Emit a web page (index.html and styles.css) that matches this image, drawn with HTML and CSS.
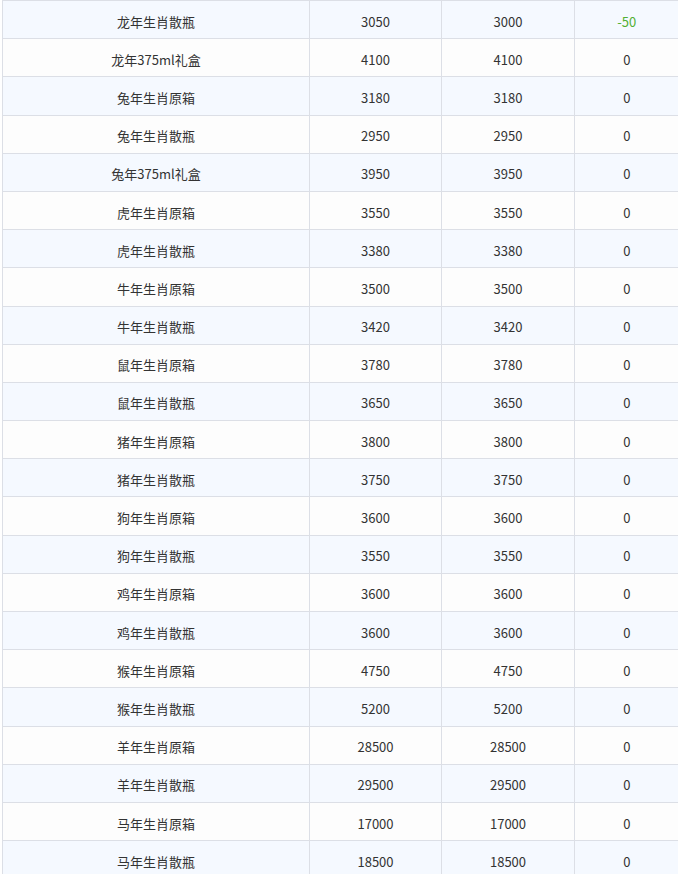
FILE: index.html
```html
<!DOCTYPE html>
<html lang="zh-CN">
<head>
<meta charset="utf-8">
<title>生肖酒价格</title>
<link rel="stylesheet" href="styles.css">
</head>
<body>
<div class="wrap">
<table class="price-table">
<colgroup>
<col class="c-name"><col class="c-num"><col class="c-num2"><col class="c-diff">
</colgroup>
<tbody>
<tr><td>龙年生肖散瓶</td><td>3050</td><td>3000</td><td class="down">-50</td></tr>
<tr><td>龙年375ml礼盒</td><td>4100</td><td>4100</td><td>0</td></tr>
<tr><td>兔年生肖原箱</td><td>3180</td><td>3180</td><td>0</td></tr>
<tr><td>兔年生肖散瓶</td><td>2950</td><td>2950</td><td>0</td></tr>
<tr><td>兔年375ml礼盒</td><td>3950</td><td>3950</td><td>0</td></tr>
<tr><td>虎年生肖原箱</td><td>3550</td><td>3550</td><td>0</td></tr>
<tr><td>虎年生肖散瓶</td><td>3380</td><td>3380</td><td>0</td></tr>
<tr><td>牛年生肖原箱</td><td>3500</td><td>3500</td><td>0</td></tr>
<tr><td>牛年生肖散瓶</td><td>3420</td><td>3420</td><td>0</td></tr>
<tr><td>鼠年生肖原箱</td><td>3780</td><td>3780</td><td>0</td></tr>
<tr><td>鼠年生肖散瓶</td><td>3650</td><td>3650</td><td>0</td></tr>
<tr><td>猪年生肖原箱</td><td>3800</td><td>3800</td><td>0</td></tr>
<tr><td>猪年生肖散瓶</td><td>3750</td><td>3750</td><td>0</td></tr>
<tr><td>狗年生肖原箱</td><td>3600</td><td>3600</td><td>0</td></tr>
<tr><td>狗年生肖散瓶</td><td>3550</td><td>3550</td><td>0</td></tr>
<tr><td>鸡年生肖原箱</td><td>3600</td><td>3600</td><td>0</td></tr>
<tr><td>鸡年生肖散瓶</td><td>3600</td><td>3600</td><td>0</td></tr>
<tr><td>猴年生肖原箱</td><td>4750</td><td>4750</td><td>0</td></tr>
<tr><td>猴年生肖散瓶</td><td>5200</td><td>5200</td><td>0</td></tr>
<tr><td>羊年生肖原箱</td><td>28500</td><td>28500</td><td>0</td></tr>
<tr><td>羊年生肖散瓶</td><td>29500</td><td>29500</td><td>0</td></tr>
<tr><td>马年生肖原箱</td><td>17000</td><td>17000</td><td>0</td></tr>
<tr><td>马年生肖散瓶</td><td>18500</td><td>18500</td><td>0</td></tr>
</tbody>
</table>
</div>
</body>
</html>
```
FILE: styles.css
```css
html, body {
  margin: 0;
  padding: 0;
  background: #ffffff;
}
.wrap {
  padding-left: 2px;
  overflow: hidden;
  height: 874px;
}
.price-table {
  width: 676px;
  border-collapse: collapse;
  table-layout: fixed;
  font-family: "Microsoft YaHei", "Noto Sans CJK SC", sans-serif;
  font-size: 13px;
  color: #333333;
}
.c-name { width: 307px; }
.c-num { width: 132px; }
.c-num2 { width: 133px; }
.c-diff { width: 104px; }
.price-table tr {
  height: 38.19px;
  background: #fdfdfd;
}
.price-table tr:nth-child(odd) {
  background: #f5f9ff;
}
.price-table td {
  border: 1px solid #dcdfe6;
  text-align: center;
  padding: 3px 0 0 0;
  vertical-align: middle;
}
.price-table td:last-child {
  border-right: none;
}
.price-table td.down {
  color: #52b033;
}
```
